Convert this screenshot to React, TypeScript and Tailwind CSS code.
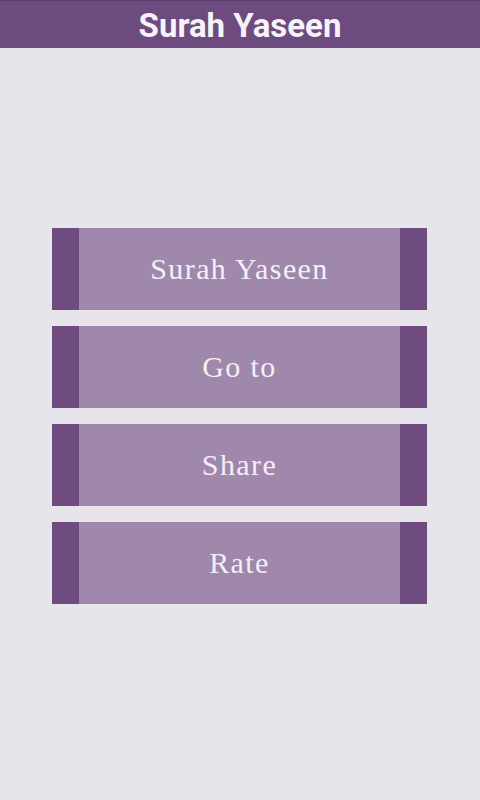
import React from "react";

const items = ["Surah Yaseen", "Go to", "Share", "Rate"];

export default function App() {
  return (
    <div className="w-[480px] h-[800px] bg-[#e7e5ea] flex flex-col">
      <div className="h-[48px] bg-[#6d4b7f] border-t border-[#5a3d6a] flex items-center justify-center pt-[2px]">
        <span
          className="text-[33px] font-bold text-[#f7f3f8] leading-none"
          style={{ fontFamily: "Roboto, 'Liberation Sans', sans-serif" }}
        >
          Surah Yaseen
        </span>
      </div>
      <div className="flex flex-col gap-[16px] pl-[52px] pt-[180px]">
        {items.map((t) => (
          <div key={t} className="w-[375px] h-[82px] flex">
            <div className="w-[27px] bg-[#6e4c80]" />
            <div className="flex-1 bg-[#9f88ab] flex items-center justify-center">
              <span
                className="text-[30px] tracking-[1.4px] text-[#f4eff6] leading-none"
                style={{ fontFamily: "'Liberation Serif', serif" }}
              >
                {t}
              </span>
            </div>
            <div className="w-[27px] bg-[#6e4c80]" />
          </div>
        ))}
      </div>
    </div>
  );
}
